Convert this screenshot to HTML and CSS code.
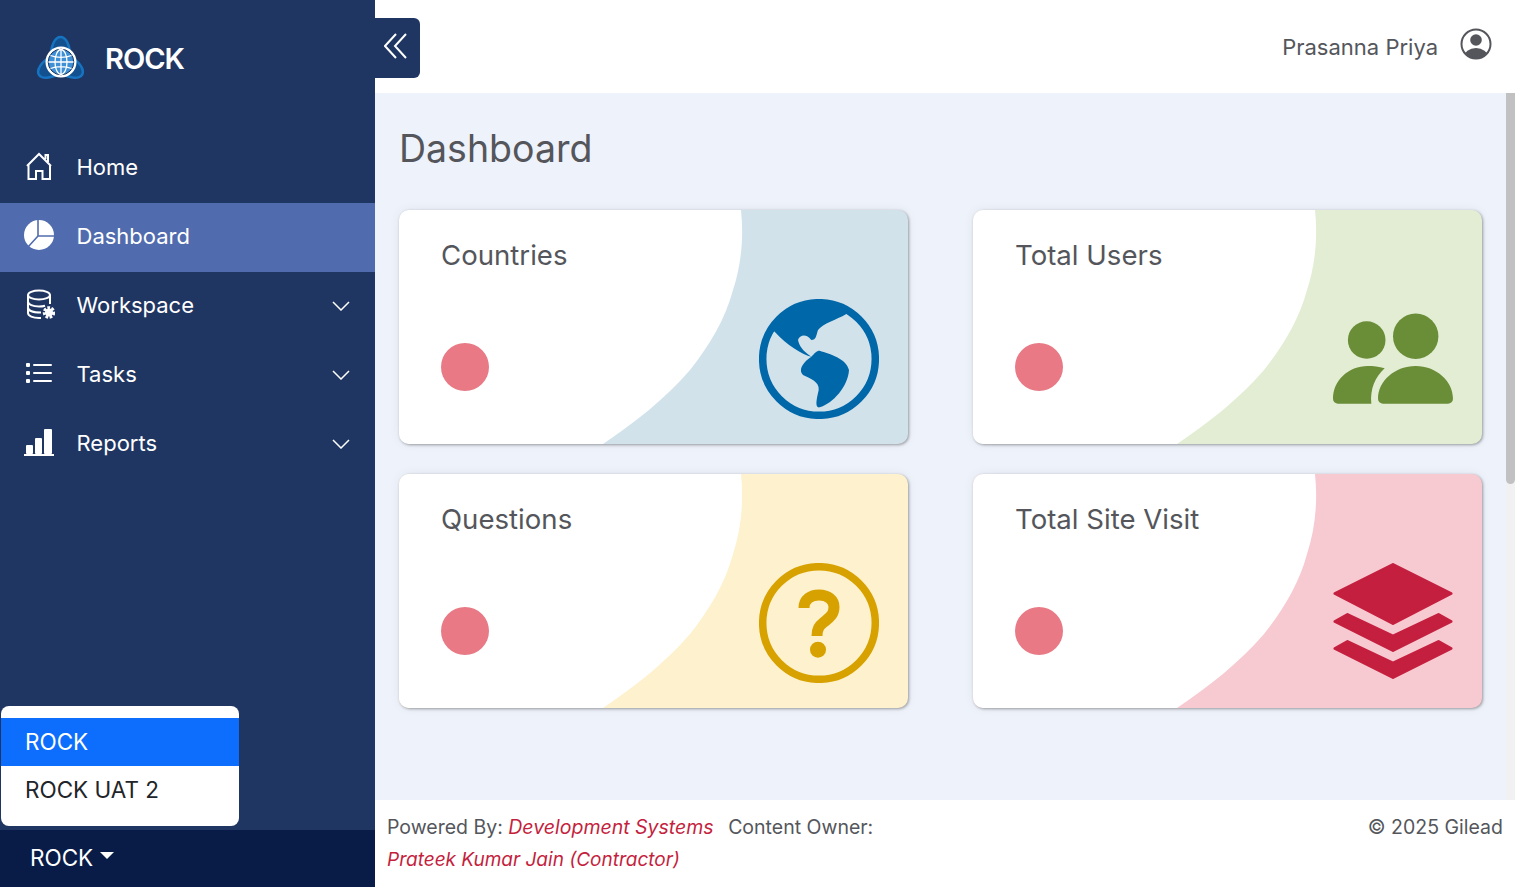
FILE: index.html
```html
<!DOCTYPE html>
<html lang="en">
<head>
  <meta charset="UTF-8">
  <meta name="viewport" content="width=device-width, initial-scale=1.0">
  <title>ROCK Dashboard</title>
  <link rel="stylesheet" href="styles.css">
</head>
<body>
  <aside class="sidebar">
    <div class="brand">
      <svg class="brand-logo" viewBox="0 0 48 48" width="48" height="48">
        <g fill="#12508f" stroke="#1673c0" stroke-width="2.500">
          <ellipse cx="24.500" cy="20" rx="9.500" ry="18"/>
          <ellipse cx="24.500" cy="20" rx="9.500" ry="18" transform="rotate(120 24.500 27)"/>
          <ellipse cx="24.500" cy="20" rx="9.500" ry="18" transform="rotate(240 24.500 27)"/>
        </g>
        <circle cx="25" cy="27" r="15.500" fill="#fff"/>
        <circle cx="25" cy="27" r="12.800" fill="#3d8fd6" stroke="#1b3460" stroke-width="1"/>
        <g fill="none" stroke="#fff" stroke-width="1.300">
          <ellipse cx="25" cy="27" rx="6" ry="12.500"/>
          <path d="M25 14.500V39.500M12.500 27H37.500M14.500 20.500C20 23 30 23 35.500 20.500M14.500 33.500C20 31 30 31 35.500 33.500"/>
        </g>
      </svg>
      <span class="brand-name">ROCK</span>
    </div>

    <nav class="menu">
      <a class="menu-item" href="#">
        <svg class="menu-icon" viewBox="0 0 32 32" fill="none" stroke="#fff" stroke-width="2">
          <path d="M4 15L16 3L28 15M5.500 13.500V28H13V20H19.500V28H27V13.500M22.500 8V4H25V11"/>
        </svg>
        <span>Home</span>
      </a>
      <a class="menu-item active" href="#">
        <svg class="menu-icon" viewBox="0 0 32 32">
          <circle cx="16" cy="15" r="15" fill="#fff"/>
          <path d="M15 0V16L31 16M15 16L5 27" fill="none" stroke="#516cae" stroke-width="1.600"/>
        </svg>
        <span>Dashboard</span>
      </a>
      <a class="menu-item" href="#">
        <svg class="menu-icon" viewBox="0 0 32 32" fill="none" stroke="#fff" stroke-width="2">
          <ellipse cx="16" cy="6" rx="11" ry="4.500"/>
          <path d="M5 6V24C5 27 10 29 16 29H18M27 6V15M5 12.500C5 15.500 10 17.500 16 17.500C18 17.500 20 17.300 22 16.700M5 18.500C5 21.500 10 23.500 18 23.500"/>
          <circle cx="26" cy="23.500" r="4" fill="#fff" stroke-width="4.500" stroke-dasharray="2.200 1.200"/>
        </svg>
        <span>Workspace</span>
        <svg class="menu-caret" viewBox="0 0 18 10" fill="none" stroke="#fff" stroke-width="1.500"><path d="M1 1L9 9L17 1"/></svg>
      </a>
      <a class="menu-item" href="#">
        <svg class="menu-icon" viewBox="0 0 32 32">
          <g fill="#fff">
            <rect x="3" y="5" width="4" height="4" rx="1"/>
            <rect x="3" y="13" width="4" height="4" rx="1"/>
            <rect x="3" y="21" width="4" height="4" rx="1"/>
            <rect x="10" y="6" width="19" height="2" rx="1"/>
            <rect x="10" y="14" width="19" height="2" rx="1"/>
            <rect x="10" y="22" width="19" height="2" rx="1"/>
          </g>
        </svg>
        <span>Tasks</span>
        <svg class="menu-caret" viewBox="0 0 18 10" fill="none" stroke="#fff" stroke-width="1.500"><path d="M1 1L9 9L17 1"/></svg>
      </a>
      <a class="menu-item" href="#">
        <svg class="menu-icon" viewBox="0 0 32 32">
          <g fill="#fff">
            <rect x="3" y="18" width="7" height="9" rx="1"/>
            <rect x="12" y="11" width="7" height="16" rx="1"/>
            <rect x="21" y="2" width="8" height="25" rx="1"/>
            <rect x="1" y="27" width="30" height="2"/>
          </g>
        </svg>
        <span>Reports</span>
        <svg class="menu-caret" viewBox="0 0 18 10" fill="none" stroke="#fff" stroke-width="1.500"><path d="M1 1L9 9L17 1"/></svg>
      </a>
    </nav>

    <ul class="app-menu">
      <li class="app-option selected">ROCK</li>
      <li class="app-option">ROCK UAT 2</li>
    </ul>
    <div class="app-switch">ROCK<span class="app-caret"></span></div>
  </aside>

  <main class="main">
    <header class="topbar">
      <button class="collapse-btn" type="button">
        <svg viewBox="0 0 24 26" width="24" height="26" fill="none" stroke="#fff" stroke-width="2"><path d="M12 1L1 13L12 25M22 1L11 13L22 25"/></svg>
      </button>
      <span class="user-name">Prasanna Priya</span>
      <svg class="user-icon" viewBox="0 0 32 32" width="32" height="32">
        <defs><clipPath id="userClip"><circle cx="16" cy="16" r="14.500"/></clipPath></defs>
        <circle cx="16" cy="12" r="5.800" fill="#54565b"/>
        <ellipse cx="16" cy="29" rx="12" ry="9" fill="#54565b" clip-path="url(#userClip)"/>
        <circle cx="16" cy="16" r="14.500" fill="none" stroke="#54565b" stroke-width="2"/>
      </svg>
    </header>

    <section class="content">
      <div class="content-inner">
        <h1 class="page-title">Dashboard</h1>
        <div class="cards">
          <div class="card card-blue">
            <h2 class="card-title">Countries</h2>
            <div class="card-dot"></div>
            <svg class="card-icon" viewBox="0 0 120 120">
              <circle cx="60" cy="60" r="56.300" fill="none" stroke="#0067a9" stroke-width="7.500"/>
              <path fill="#0067a9" d="M12.300 30.600A56 56 0 0 1 89 12.100L87.300 15C77.300 21 64 24.300 59 31C57.300 36 57.300 41 52.300 41C47.300 34.300 40.700 36 39 41C40.700 49.300 47.300 54.300 52.300 57.700C44 56 27.300 46 15.700 32.700Z"/>
              <path fill="#0067a9" d="M60.700 51.700C70.700 55 87.300 59.300 90 71C89 87.700 74 104.300 60.700 108.300C55.700 109.300 57.300 101 59.700 91C60.700 82.700 50.700 79.300 44 76C39 71 44 64.300 49 60.300L52.300 57.700C55.700 54.300 57.300 51.700 60.700 51.700Z"/>
            </svg>
          </div>
          <div class="card card-green">
            <h2 class="card-title">Total Users</h2>
            <div class="card-dot"></div>
            <svg class="card-icon" viewBox="0 0 120 120" fill="#6a8d37">
              <circle cx="33.700" cy="41" r="18.800"/>
              <circle cx="82.700" cy="37.300" r="22.700"/>
              <path d="M5 104.700H38.300C37 90 42 78 51.700 69.300C46 67.500 40 67 35 67C15 67 0 82 0 99.700A5 5 0 0 0 5 104.700Z"/>
              <path d="M50 104.700H115A5 5 0 0 0 120 99.700C120 82 103 67 82.700 67C62 67 45 82 45 99.700A5 5 0 0 0 50 104.700Z"/>
            </svg>
          </div>
          <div class="card card-yellow">
            <h2 class="card-title">Questions</h2>
            <div class="card-dot"></div>
            <svg class="card-icon" viewBox="0 0 120 120">
              <circle cx="60" cy="60" r="56.300" fill="none" stroke="#d7a100" stroke-width="7.500"/>
              <path d="M45 45C45 36 52 32 60 32C69 32 75 37 75 44C75 52 70 55 65 59C60 63 58 66 58 73" fill="none" stroke="#d7a100" stroke-width="11"/>
              <circle cx="59" cy="86.700" r="8" fill="#d7a100"/>
            </svg>
          </div>
          <div class="card card-pink">
            <h2 class="card-title">Total Site Visit</h2>
            <div class="card-dot"></div>
            <svg class="card-icon" viewBox="0 0 120 120" fill="#c41f3e" stroke="#c41f3e" stroke-width="3" stroke-linejoin="round">
              <path d="M60 1.500L118 30.500L60 60.500L2 30.500Z"/>
              <path d="M2 58.500L14.500 51.500L60 73L105.500 51.500L118 58.500L60 87.500Z"/>
              <path d="M2 85.500L14.500 78.500L60 100L105.500 78.500L118 85.500L60 114.500Z"/>
            </svg>
          </div>
        </div>
      </div>
      <div class="scroll-track"><div class="scroll-thumb"></div></div>
    </section>

    <footer class="footer">
      <div class="footer-left">
        Powered By: <em class="footer-link">Development Systems</em>
        <span class="owner">Content Owner:</span>
        <em class="footer-link owner-name">Prateek Kumar Jain (Contractor)</em>
      </div>
      <div>© 2025 Gilead</div>
    </footer>
  </main>
</body>
</html>
```

FILE: styles.css
```css
* {
  box-sizing: border-box;
}
body {
  margin: 0;
  height: 100vh;
  display: flex;
  overflow: hidden;
  font-family: "Inter", "Noto Sans", sans-serif;
  color: #54565b;
  background: #fff;
}

/* sidebar */
.sidebar {
  width: 375px;
  flex-shrink: 0;
  display: flex;
  flex-direction: column;
  position: relative;
  background: #1f3663;
  color: #fff;
}
.brand {
  height: 134px;
  padding: 0 0 17px 36px;
  display: flex;
  align-items: center;
  gap: 21px;
}
.brand-name {
  font-size: 29px;
  font-weight: 600;
  letter-spacing: -1px;
}
.menu {
  flex: 1;
}
.menu-item {
  height: 69px;
  padding: 0 25px 4px 23px;
  display: flex;
  align-items: center;
  color: #fff;
  font-size: 22px;
  text-decoration: none;
}
.menu-item.active {
  background: #516cae;
}
.menu-icon {
  width: 32px;
  height: 32px;
  margin-right: 21.500px;
  flex-shrink: 0;
}
.menu-caret {
  width: 18px;
  height: 10px;
  margin: 3px 0 0 auto;
}
.app-switch {
  height: 57px;
  padding: 0 0 2px 30px;
  display: flex;
  align-items: center;
  background: #081c47;
  font-size: 22.500px;
}
.app-caret {
  margin: 0 0 5px 7px;
  border-top: 7px solid #fff;
  border-left: 7px solid transparent;
  border-right: 7px solid transparent;
}
.app-menu {
  position: absolute;
  left: 1px;
  bottom: 61px;
  width: 238px;
  margin: 0;
  padding: 12px 0;
  list-style: none;
  background: #fff;
  border-radius: 8px;
}
.app-option {
  height: 48px;
  padding: 0 0 2px 24px;
  display: flex;
  align-items: center;
  color: #212529;
  font-size: 22.500px;
}
.app-option.selected {
  background: #0d6efd;
  color: #fff;
}

/* main column */
.main {
  flex: 1;
  min-width: 0;
  display: flex;
  flex-direction: column;
}
.topbar {
  height: 93px;
  flex-shrink: 0;
  padding: 0 23px 0 0;
  display: flex;
  align-items: center;
  justify-content: flex-end;
  position: relative;
}
.collapse-btn {
  position: absolute;
  left: 0;
  top: 18px;
  width: 45px;
  height: 60px;
  padding: 0 4px 2px 0;
  border: none;
  border-radius: 0 6px 6px 0;
  background: #1f3663;
}
.user-name {
  font-size: 22px;
}
.user-icon {
  margin: 0 0 6px 22px;
}
.content {
  flex: 1;
  min-height: 0;
  display: flex;
  overflow: hidden;
  background: #eef2fa;
}
.content-inner {
  flex: 1;
  min-width: 0;
  padding: 29px 24px;
}
.scroll-track {
  width: 9px;
  flex-shrink: 0;
  background: #f1f1f1;
}
.scroll-thumb {
  height: 391px;
  border-radius: 0 0 5px 5px;
  background: #c1c1c1;
}
.page-title {
  margin: 0 0 34px;
  height: 54px;
  font-size: 37.500px;
  line-height: 54px;
  font-weight: 400;
}
.cards {
  display: grid;
  grid-template-columns: 1fr 1fr;
  gap: 30px 65px;
}
.card {
  height: 234px;
  padding: 25px 42px;
  position: relative;
  overflow: hidden;
  border-radius: 10px;
  box-shadow: 1px 1px 3px rgba(0,0,0,0.35), 0 0 12px rgba(0,0,0,0.06);
}
/* white part of the card with the curved edge */
.card::before {
  content: "";
  position: absolute;
  inset: 0;
  background: #fff;
  clip-path: path("M0 0H342C345 28 342 56 334 80C326 110 310 136 291 160C265 190 235 213 204 234H0Z");
}
.card-blue { background: #d2e2eb; }
.card-green { background: #e3edd4; }
.card-yellow { background: #fef1cd; }
.card-pink { background: #f7c9d1; }
.card-title {
  position: relative;
  margin: 0;
  font-size: 27.600px;
  line-height: 40px;
  font-weight: 400;
}
.card-dot {
  position: relative;
  width: 48px;
  height: 48px;
  margin-top: 68px;
  border-radius: 50%;
  background: #e87985;
}
.card-icon {
  position: absolute;
  right: 29px;
  top: 89px;
  width: 120px;
  height: 120px;
}

/* footer */
.footer {
  height: 87px;
  flex-shrink: 0;
  padding: 11px 12px 0;
  display: flex;
  justify-content: space-between;
  font-size: 19.500px;
  line-height: 32px;
}
.footer-left {
  max-width: 560px;
}
.footer-link {
  color: #c41f3e;
}
.owner {
  margin-left: 9px;
}
.owner-name {
  font-size: 19px;
  white-space: nowrap;
}
```
